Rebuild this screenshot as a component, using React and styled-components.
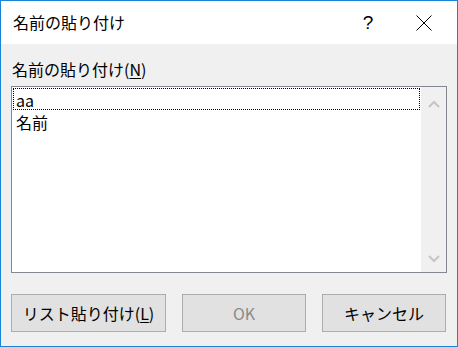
import React from "react";
import styled, { createGlobalStyle } from "styled-components";

const Global = createGlobalStyle`
  html, body {
    margin: 0;
    padding: 0;
    background: #ffffff;
  }
  body {
    font-family: "Noto Sans CJK JP", "Noto Sans", sans-serif;
  }
`;

const Window = styled.div`
  box-sizing: border-box;
  width: 458px;
  height: 347px;
  border: 1px solid #1883d7;
  display: flex;
  flex-direction: column;
  background: #f0f0f0;
  color: #000;
  font-size: 16px;
`;

const TitleBar = styled.div`
  height: 43px;
  background: #ffffff;
  display: flex;
  align-items: center;
  padding-left: 12px;
  flex-shrink: 0;
`;

const Title = styled.div`
  flex: 1;
  line-height: 20px;
  margin-top: -2px;
`;

const TitleButton = styled.div`
  width: ${({ w }) => w}px;
  height: 43px;
  display: flex;
  align-items: center;
  justify-content: center;
  line-height: 20px;
  font-family: "Liberation Sans", "Noto Sans", sans-serif;
  font-size: 19px;
`;

const Body = styled.div`
  flex: 1;
  display: flex;
  flex-direction: column;
  padding: 15px 10px 0 10px;
`;

const Label = styled.div`
  line-height: 20px;
  padding-left: 1px;
  margin-bottom: 7px;
`;

const Mnemonic = styled.span`
  text-decoration: underline;
  text-underline-offset: 2px;
`;

const ListBox = styled.div`
  height: 187px;
  box-sizing: border-box;
  border: 1px solid #828790;
  background: #ffffff;
  display: flex;
`;

const Items = styled.div`
  flex: 1;
  padding: 1px 1px 0 1px;
`;

const Item = styled.div`
  height: 22px;
  line-height: 22px;
  box-sizing: border-box;
  padding-left: 2px;
  border: 1px dotted ${({ focused }) => (focused ? "#000" : "transparent")};
`;

const ScrollBar = styled.div`
  width: 25px;
  background: #f0f0f0;
  display: flex;
  flex-direction: column;
  justify-content: space-between;
  align-items: center;
  padding: 12px 0 8px;
`;

const Footer = styled.div`
  display: flex;
  gap: 16px;
  margin-top: 21px;
`;

const Button = styled.div`
  box-sizing: border-box;
  width: ${({ w }) => w}px;
  height: 38px;
  border: 1px solid #adadad;
  background: #e1e1e1;
  display: flex;
  align-items: center;
  justify-content: center;
  line-height: 20px;
  color: ${({ disabled }) => (disabled ? "#8a8a8a" : "#000")};
`;

const Chevron = ({ up }) => (
  <svg width="12" height="9" viewBox="0 0 12 9">
    <polyline
      points={up ? "1,8 6,3 11,8" : "1,1 6,6 11,1"}
      fill="none"
      stroke="#c5c5c5"
      strokeWidth="2"
    />
  </svg>
);

export default function App() {
  return (
    <>
      <Global />
      <Window>
        <TitleBar>
          <Title>名前の貼り付け</Title>
          <TitleButton w={46}>?</TitleButton>
          <TitleButton w={66}>
            <svg width="16" height="16" viewBox="0 0 16 16">
              <path d="M0.5 0.5 L15.5 15.5 M15.5 0.5 L0.5 15.5" stroke="#000" strokeWidth="1" />
            </svg>
          </TitleButton>
        </TitleBar>
        <Body>
          <Label>
            名前の貼り付け(<Mnemonic>N</Mnemonic>)
          </Label>
          <ListBox>
            <Items>
              <Item focused>aa</Item>
              <Item>名前</Item>
            </Items>
            <ScrollBar>
              <Chevron up />
              <Chevron />
            </ScrollBar>
          </ListBox>
          <Footer>
            <Button w={155}>
              リスト貼り付け(<Mnemonic>L</Mnemonic>)
            </Button>
            <Button w={124} disabled>
              OK
            </Button>
            <Button w={124}>キャンセル</Button>
          </Footer>
        </Body>
      </Window>
    </>
  );
}
